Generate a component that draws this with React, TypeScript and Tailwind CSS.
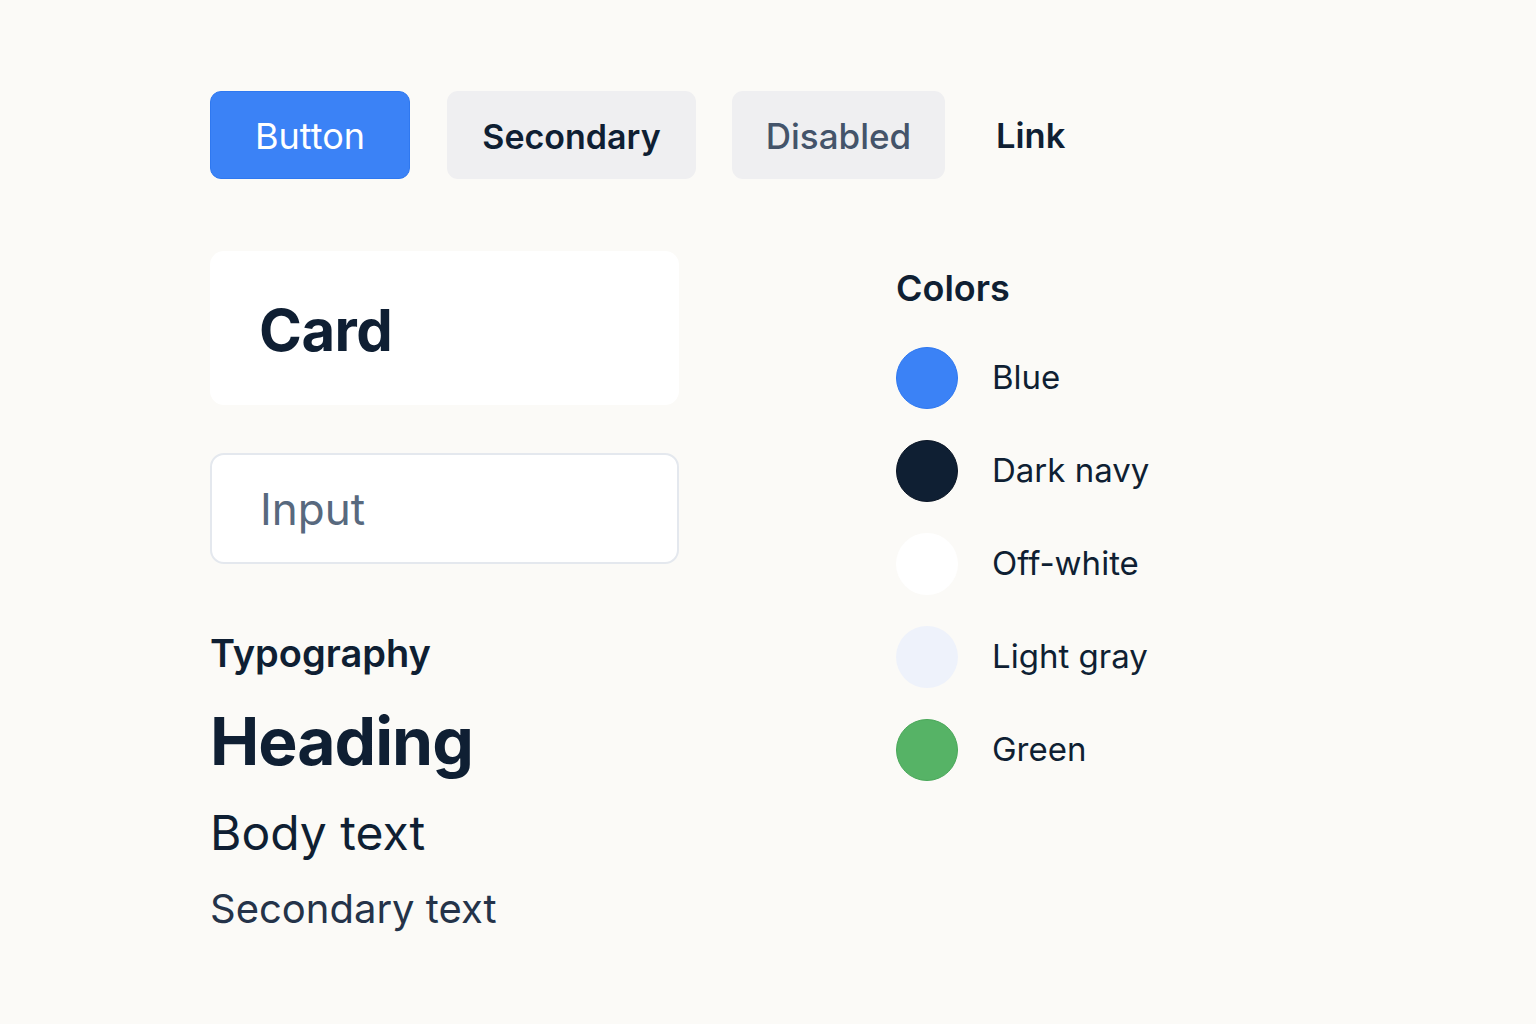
const swatches = [
  { name: 'Blue', color: 'bg-[#3b82f6] border border-[#2f78f0]' },
  { name: 'Dark navy', color: 'bg-[#0f1f33] border border-[#0b1626]' },
  { name: 'Off-white', color: 'bg-white' },
  { name: 'Light gray', color: 'bg-[#eef2fb]' },
  { name: 'Green', color: 'bg-[#56b366] border border-[#4aa85a]' },
]

export default function App() {
  return (
    <div className="min-h-screen w-full bg-[#fbfaf7] font-['Inter',sans-serif] text-[#0f1f33]">
      <div className="pl-[210px] pt-[91px]">
        <div className="flex items-center">
          <button className="h-[88px] w-[200px] rounded-[11px] border border-[#2f78f0] bg-[#3b82f6] pt-[2px] text-[36px] font-normal text-white">
            Button
          </button>
          <button className="ml-[37px] h-[88px] w-[249px] rounded-[11px] bg-[#efeff1] pt-[2px] text-[34px] font-semibold text-[#0f1f33]">
            Secondary
          </button>
          <button className="ml-[36px] h-[88px] w-[213px] rounded-[11px] bg-[#efeff1] pt-[2px] text-[35px] font-medium text-[#44546a]">
            Disabled
          </button>
          <a className="ml-[51px] pt-[2px] text-[34.5px] font-semibold text-[#0f1f33]">Link</a>
        </div>

        <div className="mt-[72px] flex">
          <div className="w-[469px]">
            <div className="flex h-[154px] items-center rounded-[14px] bg-white pl-[49px] pt-[4px]">
              <h2 className="text-[58px] font-bold leading-none tracking-[-0.5px]">Card</h2>
            </div>
            <div className="mt-[48px] flex h-[111px] items-center rounded-[14px] border-2 border-[#e4e8ee] bg-white pl-[48px]">
              <span className="text-[44px] text-[#58697e]">Input</span>
            </div>
            <div className="mt-[66px]">
              <h3 className="text-[38px] font-semibold leading-[46px]">Typography</h3>
              <h1 className="mt-[29px] text-[66px] font-bold leading-[72px] tracking-[-1px]">Heading</h1>
              <p className="mt-[28px] text-[48px] leading-[56px]">Body text</p>
              <p className="mt-[24px] text-[40px] leading-[48px] text-[#243349]">Secondary text</p>
            </div>
          </div>

          <div className="ml-[217px] pt-[14px]">
            <h3 className="text-[36px] font-semibold leading-[46px]">Colors</h3>
            <ul className="mt-[36px] flex flex-col gap-[31px]">
              {swatches.map((s) => (
                <li key={s.name} className="flex items-center">
                  <span className={`h-[62px] w-[62px] rounded-full ${s.color}`} />
                  <span className="ml-[34px] text-[33px]">{s.name}</span>
                </li>
              ))}
            </ul>
          </div>
        </div>
      </div>
    </div>
  )
}
